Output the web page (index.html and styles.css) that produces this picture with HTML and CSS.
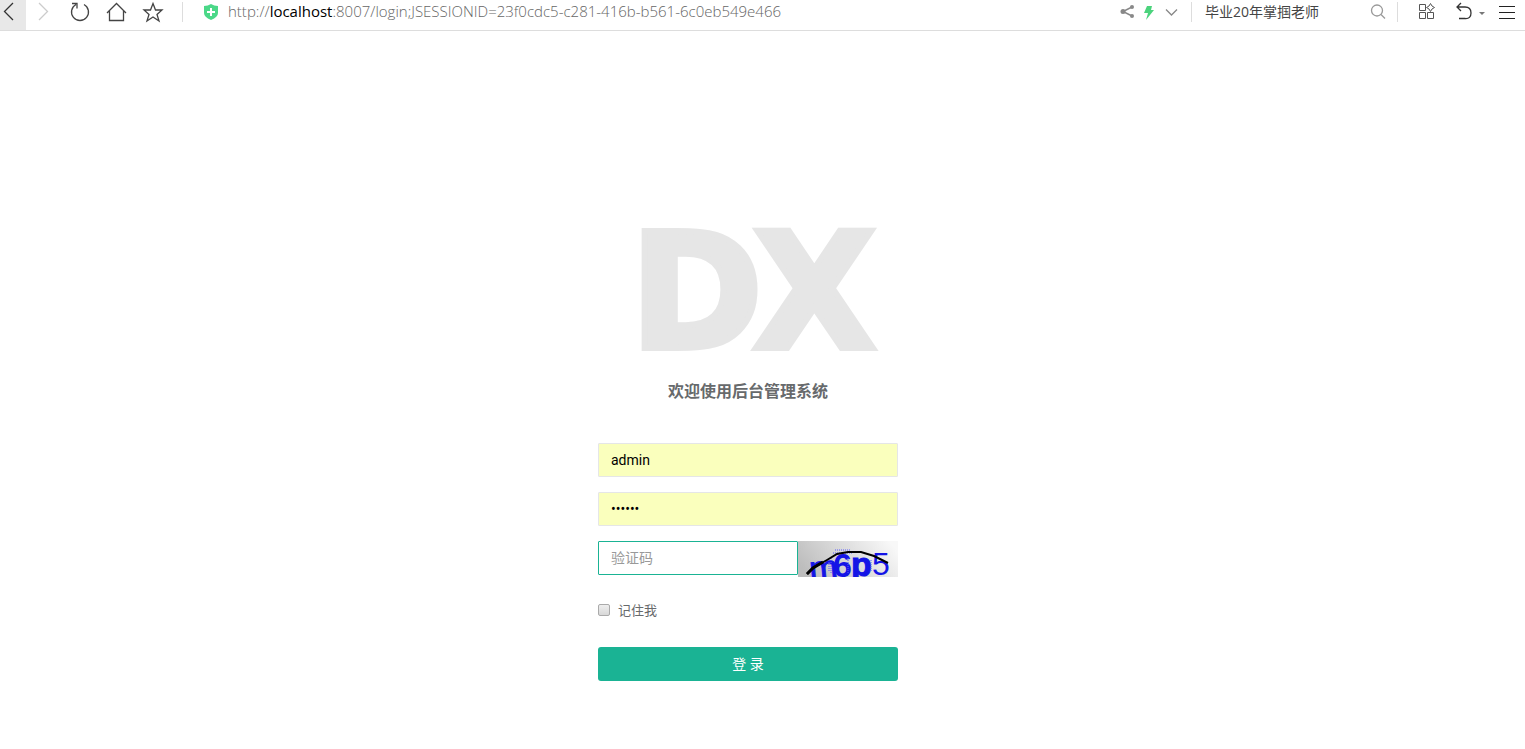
FILE: index.html
```html
<!DOCTYPE html>
<html lang="zh-CN">
<head>
    <meta charset="UTF-8">
    <meta name="viewport" content="width=device-width, initial-scale=1.0">
    <title>登录</title>
    <link rel="stylesheet" href="styles.css">
</head>
<body>
    <header class="toolbar">
        <button type="button" class="tool back" aria-label="后退">
            <svg width="26" height="30" viewBox="0 0 26 30"><path d="M13 3 4.500 11.500 13 20" stroke="#333" stroke-width="1.300"/></svg>
        </button>
        <button type="button" class="tool" aria-label="前进">
            <svg width="34" height="30" viewBox="0 0 34 30"><path d="M13 3 21.500 11.500 13 20" stroke="#ccc" stroke-width="1.300"/></svg>
        </button>
        <button type="button" class="tool" aria-label="刷新">
            <svg width="37" height="30" viewBox="0 0 37 30"><path d="M24 4.500A8.500 8.500 0 1 1 16 4.500M12 3.500h5v5" stroke="#444" stroke-width="1.300"/></svg>
        </button>
        <button type="button" class="tool" aria-label="主页">
            <svg width="37" height="30" viewBox="0 0 37 30"><path d="M10 13 19.500 3.500 29 13M12.500 11v9.500h14V11" stroke="#444" stroke-width="1.300"/></svg>
        </button>
        <button type="button" class="tool" aria-label="收藏">
            <svg width="37" height="30" viewBox="0 0 37 30"><path d="M19 3.500 21.500 10h6.500l-5 4.500 2 6.500-6-4-6 4 2-6.500-5-4.500h6.500z" stroke="#444" stroke-width="1.300"/></svg>
        </button>
        <span class="divider shift"></span>
        <svg class="shield" width="14" height="16" viewBox="0 0 14 16"><path d="M0 2Q4 2 7 0q3 2 7 2v7q0 4-7 7-7-3-7-7z" fill="#4bd888"/><path d="M7 4v8M3 8h8" stroke="#fff" stroke-width="2"/></svg>
        <div class="address">http://<b>localhost</b>:8007/login;JSESSIONID=23f0cdc5-c281-416b-b561-6c0eb549e466</div>
        <button type="button" class="tool" aria-label="分享">
            <svg width="22" height="30" viewBox="0 0 22 30"><path d="M15 7 6 11.500l9 4.500" stroke="#888" stroke-width="1.500"/><g fill="#888"><circle cx="15" cy="7" r="2"/><circle cx="6" cy="11.500" r="2.500"/><circle cx="15" cy="16" r="2"/></g></svg>
        </button>
        <button type="button" class="tool" aria-label="极速模式">
            <svg width="22" height="30" viewBox="0 0 22 30"><path d="M8 6h5l-1 4h3L7 20l2-7H5z" fill="#4bd37c"/></svg>
        </button>
        <button type="button" class="tool" aria-label="更多">
            <svg width="30" height="30" viewBox="0 0 30 30"><path d="m5 9.500 5.500 5.500L16 9.500" stroke="#888" stroke-width="1.300"/></svg>
        </button>
        <span class="divider"></span>
        <input class="search" type="text" value="毕业20年掌掴老师" aria-label="搜索">
        <button type="button" class="tool" aria-label="搜索">
            <svg width="32" height="30" viewBox="0 0 32 30"><circle cx="12" cy="10.500" r="5.500" stroke="#999" stroke-width="1.300"/><path d="m16 14.500 4 4" stroke="#999" stroke-width="1.300"/></svg>
        </button>
        <span class="divider"></span>
        <button type="button" class="tool" aria-label="扩展">
            <svg width="48" height="30" viewBox="0 0 48 30"><path d="M21.500 4.500h6v6h-6zM21.500 12.500h6v6h-6zM29.500 12.500h6v6h-6zM32.500 3.500l1.500 2.500 2.500 1.500-2.500 1.500-1.500 2.500L31 9l-2.500-1.500L31 6z" stroke="#555"/></svg>
        </button>
        <button type="button" class="tool" aria-label="恢复">
            <svg width="42" height="30" viewBox="0 0 42 30"><path d="m15 3-4 4 4 4M11 7h8q6 0 6 6t-6 5.500h-6" stroke="#333" stroke-width="1.300"/><path d="M33 12h6l-3 3z" fill="#777"/></svg>
        </button>
        <button type="button" class="tool" aria-label="菜单">
            <svg width="37" height="30" viewBox="0 0 37 30"><path d="M11 6.500h16M11 12.500h16M11 18.500h16" stroke="#222"/></svg>
        </button>
    </header>

    <main class="page">
        <div class="login-box">
            <h1 class="logo-name">DX</h1>
            <h3>欢迎使用后台管理系统</h3>
            <form class="login-form">
                <input type="text" class="form-control filled" value="admin" aria-label="用户名">
                <input type="password" class="form-control filled" value="123456" aria-label="密码">
                <div class="captcha-row">
                    <input type="text" class="form-control active" placeholder="验证码" aria-label="验证码">
                    <svg class="captcha" width="100" height="36" viewBox="0 0 100 36" role="img" aria-label="m6p5">
                        <defs>
                            <linearGradient id="noise" x1="0" y1="0.600" x2="1" y2="0.300">
                                <stop offset="0" stop-color="#bdbdbd"/>
                                <stop offset="1" stop-color="#f8f8f8"/>
                            </linearGradient>
                        </defs>
                        <rect width="100" height="36" fill="url(#noise)"/>
                        <g class="captcha-text">
                            <text x="12" y="39" font-size="34" transform="rotate(-5 20 36)" stroke="#1414e6">m</text>
                            <text x="35" y="36" font-size="34" font-weight="bold">6</text>
                            <text x="53" y="35" font-size="34" font-weight="bold" stroke="#1414e6">p</text>
                            <text x="74" y="34" font-size="32">5</text>
                        </g>
                        <path d="M37 9h16M35 12h19M33 17v15M31 19v12M50 17v16M73 19v12" stroke="#5658ff" stroke-dasharray="1 1"/>
                        <path d="m9 33 6-6 14-8 10-6 11-2h13l13 4 14 7" fill="none" stroke="#000" stroke-width="2"/>
                        <path d="m9 33 6-6 10-6" fill="none" stroke="#000" stroke-width="3"/>
                    </svg>
                </div>
                <label class="remember"><input type="checkbox"> 记住我</label>
                <button type="submit" class="btn-login">登 录</button>
            </form>
        </div>
    </main>
</body>
</html>
```
FILE: styles.css
```css
* {
    box-sizing: border-box;
}

body {
    margin: 0;
    background-color: #fff;
    color: #676a6c;
    font-family: "Open Sans", "Noto Sans CJK SC", sans-serif;
    font-size: 13px;
}

/* Browser bar */
.toolbar {
    display: flex;
    height: 31px;
    border-bottom: 1px solid #ddd;
}

.tool {
    flex: none;
    padding: 0;
    border: none;
    background: none;
    cursor: pointer;
}

.tool svg {
    display: block;
    fill: none;
}

.back {
    background-color: #e8e8e8;
}

.divider {
    flex: none;
    width: 1px;
    height: 20px;
    margin-top: 2px;
    background-color: #ddd;
}

.shift {
    margin-left: 11px;
}

.shield {
    flex: none;
    margin: 4px 10px 0 21px;
    fill: none;
}

.address {
    flex: 1;
    overflow: hidden;
    color: #666;
    font-size: 15px;
    font-weight: 300;
    line-height: 22px;
    white-space: nowrap;
}

.address b {
    color: #000;
    font-weight: 400;
}

.search {
    width: 173px;
    height: 22px;
    padding: 0 13px;
    border: none;
    outline: none;
    background: none;
    color: #444;
    font-family: inherit;
    font-size: 14px;
}

/* Login */
.page {
    padding: 176px 29px 40px 0;
}

.login-box {
    width: 300px;
    margin: 0 auto;
    text-align: center;
}

.logo-name {
    margin: 0;
    color: #e6e6e6;
    font-family: "DejaVu Sans", sans-serif;
    font-size: 160px;
    font-weight: bold;
    line-height: 172px;
    letter-spacing: -10px;
    white-space: nowrap;
    -webkit-text-stroke: 6px #e6e6e6;
}

h3 {
    margin: 0 0 40px;
    font-size: 16px;
    font-weight: 600;
    line-height: 24px;
}

.login-form {
    display: flex;
    flex-direction: column;
    gap: 15px;
}

.form-control {
    width: 100%;
    height: 34px;
    padding: 6px 12px;
    border: 1px solid #e5e6e7;
    border-radius: 1px;
    outline: none;
    background-color: #fff;
    color: #000;
    font-family: Roboto, "Noto Sans CJK SC", sans-serif;
    font-size: 14px;
}

.form-control::placeholder {
    color: #999;
}

.filled {
    background-color: #faffbd;
}

.active {
    flex: 1;
    min-width: 0;
    border-color: #1ab394;
}

.captcha-row {
    display: flex;
    align-items: flex-start;
}

.captcha-text {
    fill: #1414e6;
    font-family: "Liberation Sans", sans-serif;
}

.remember {
    display: flex;
    align-items: center;
    gap: 8px;
    height: 36px;
    margin-bottom: 4px;
    line-height: 20px;
}

.remember input {
    appearance: none;
    width: 12px;
    height: 12px;
    margin: 0;
    border: 1px solid #aaa;
    border-radius: 2px;
    background: linear-gradient(#eee, #d8d8d8);
}

.btn-login {
    height: 34px;
    padding: 0 0 2px;
    border: none;
    border-radius: 3px;
    background-color: #1ab394;
    color: #fff;
    font-family: inherit;
    font-size: 14px;
    cursor: pointer;
}
```
